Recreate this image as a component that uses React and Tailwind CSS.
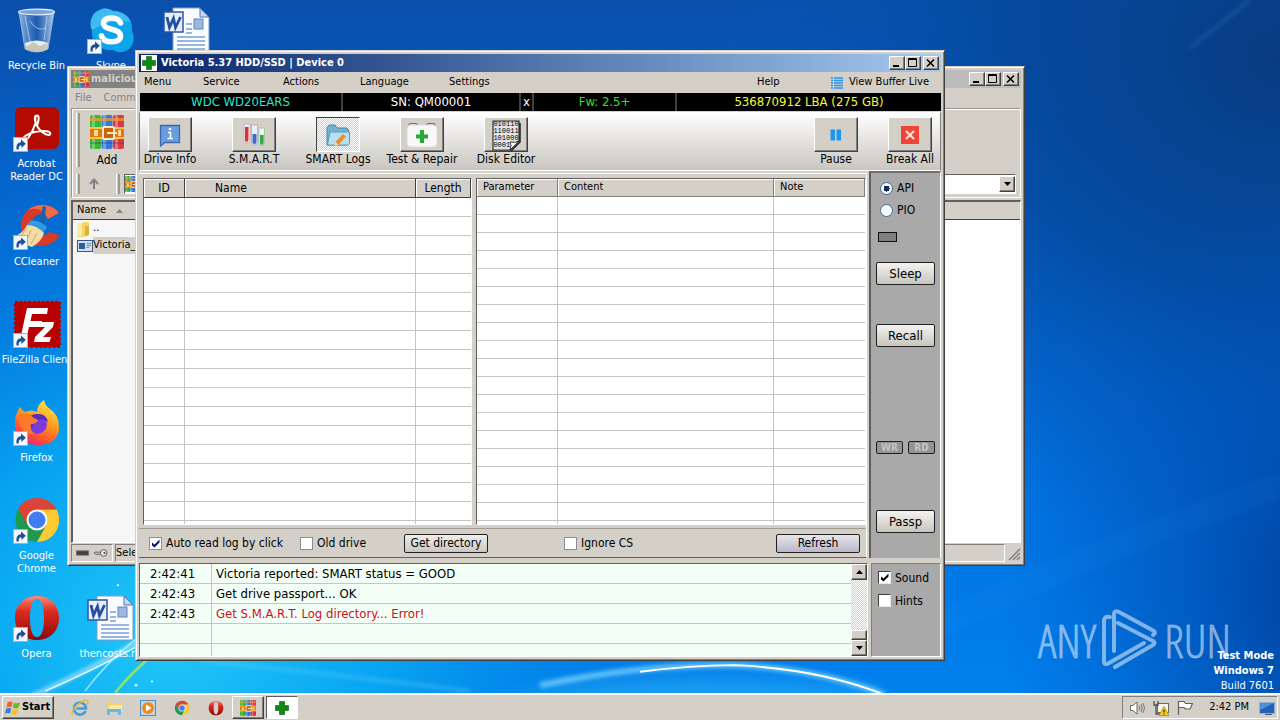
import React from "react";

const raised =
  "border border-t-white border-l-white border-r-[#404040] border-b-[#404040] bg-[#d4d0c8] shadow-[inset_-1px_-1px_0_#808080]";
const frame =
  "border border-t-[#d4d0c8] border-l-[#d4d0c8] border-r-[#404040] border-b-[#404040] bg-[#d4d0c8] shadow-[inset_1px_1px_0_#fff,inset_-1px_-1px_0_#808080] p-[3px]";
const sunken = "border border-t-[#606060] border-l-[#606060] border-r-white border-b-white";
const dither = "bg-[repeating-conic-gradient(#fff_0_25%,#d4d0c8_0_50%)] bg-[length:2px_2px]";

/* ---------- wallpaper ---------- */

function Wallpaper() {
  return (
    <svg
      className="absolute inset-0 h-full w-full"
      viewBox="0 0 1280 720"
      preserveAspectRatio="none"
      aria-hidden="true"
    >
      <defs>
        <linearGradient id="wpBase" x1="0" y1="0" x2="0" y2="1">
          <stop offset="0" stopColor="#0a50ac" />
          <stop offset="0.45" stopColor="#0268d4" />
          <stop offset="1" stopColor="#0080ee" />
        </linearGradient>
        <radialGradient id="wpGlow" gradientUnits="userSpaceOnUse" cx="0" cy="0" r="1" gradientTransform="translate(170 660) scale(620 620)">
          <stop offset="0" stopColor="#22c8f8" />
          <stop offset="0.35" stopColor="#08a8f2" stopOpacity="0.9" />
          <stop offset="0.7" stopColor="#0480e4" stopOpacity="0.4" />
          <stop offset="1" stopColor="#0268d4" stopOpacity="0" />
        </radialGradient>
        <radialGradient id="wpDark" gradientUnits="userSpaceOnUse" cx="0" cy="0" r="1" gradientTransform="translate(1280 60) scale(560 520)">
          <stop offset="0" stopColor="#083c80" />
          <stop offset="0.5" stopColor="#04489c" stopOpacity="0.8" />
          <stop offset="1" stopColor="#0458b8" stopOpacity="0" />
        </radialGradient>
        <radialGradient id="wpDark2" gradientUnits="userSpaceOnUse" cx="0" cy="0" r="1" gradientTransform="translate(1320 620) scale(320 420)">
          <stop offset="0" stopColor="#003c98" stopOpacity="0.95" />
          <stop offset="1" stopColor="#0050b8" stopOpacity="0" />
        </radialGradient>
        <filter id="wpSoft" x="-20%" y="-20%" width="140%" height="140%">
          <feGaussianBlur stdDeviation="2" />
        </filter>
        <filter id="wpSofter" x="-20%" y="-60%" width="140%" height="220%">
          <feGaussianBlur stdDeviation="10" />
        </filter>
      </defs>
      <rect width="1280" height="720" fill="url(#wpBase)" />
      <rect width="1280" height="720" fill="url(#wpGlow)" />
      <rect width="1280" height="720" fill="url(#wpDark)" />
      <rect width="1280" height="720" fill="url(#wpDark2)" />
      <path d="M480 740 Q640 680 880 720 V760 H480Z" fill="#30b8f8" opacity="0.55" filter="url(#wpSofter)" />
      <path d="M930 640 Q1040 580 1280 490 V520 Q1080 590 930 670Z" fill="#3aa0f0" opacity="0.06" filter="url(#wpSoft)" />
      <path d="M1190 50 L1250 0" stroke="#6fb0ee" strokeWidth="2" opacity="0.3" filter="url(#wpSoft)" />
      <path d="M540 712 Q640 690 735 691 Q820 695 885 722" fill="none" stroke="#8fe0ff" strokeWidth="6" opacity="0.7" filter="url(#wpSoft)" />
      <path d="M640 698 Q690 691 735 691 Q820 695 885 722" fill="none" stroke="#fff" strokeWidth="2" />
      <path d="M30 724 Q90 696 150 660" fill="none" stroke="#fff" strokeWidth="3" opacity="0.75" filter="url(#wpSoft)" />
      <path d="M45 718 Q90 698 140 670" fill="none" stroke="#e6fbff" strokeWidth="1.5" />
      <path d="M85 718 Q105 690 138 662" fill="none" stroke="#b8f2ff" strokeWidth="1.5" opacity="0.8" />
      <path d="M115 720 Q130 700 160 674" fill="none" stroke="#8fe36a" strokeWidth="2.5" />
      <path d="M200 686 Q330 700 470 718" fill="none" stroke="#7fdcff" strokeWidth="2" opacity="0.6" filter="url(#wpSoft)" />
      <circle cx="118" cy="608" r="1.2" fill="#d8f8ff" />
      <circle cx="152" cy="708" r="1" fill="#fff" />
      <circle cx="136" cy="712" r="1.4" fill="#d8f8ff" />
    </svg>
  );
}

/* ---------- desktop icons ---------- */

function ShortcutArrow() {
  return (
    <g>
      <rect x="0.5" y="33.5" width="14" height="14" fill="#f4f8fc" stroke="#9ab4cc" />
      <path d="M3.5 45.5C3 41 4.500 38.500 8 38.300V35.500L12.800 39.800 8.400 44V41.300C6.400 41.300 5.300 42.800 5.800 45.500Z" fill="#1f4f96" />
    </g>
  );
}

const Art = ({ children, shortcut }) => (
  <svg className="h-12 w-12 shrink-0" viewBox="0 0 48 48" aria-hidden="true">
    {children}
    {shortcut && <ShortcutArrow />}
  </svg>
);

const RecycleArt = () => (
  <Art>
    <defs>
      <linearGradient id="bin" x1="0" x2="1">
        <stop offset="0" stopColor="#b9d4f0" stopOpacity="0.75" />
        <stop offset="0.5" stopColor="#2f66b4" stopOpacity="0.55" />
        <stop offset="1" stopColor="#d8e8f8" stopOpacity="0.8" />
      </linearGradient>
    </defs>
    <path d="M6 6 L12 43 Q24 49 35 43 L41 6Z" fill="url(#bin)" stroke="#a8c4e0" strokeWidth="0.8" />
    <path d="M12 37 Q24 32 35 37 L34 43 Q24 48 13 43Z" fill="#e8eef2" />
    <path d="M13 41 L20 36 27 40 34 37 33 44 Q24 48 14 44Z" fill="#c9c6b8" />
    <path d="M12 10 L17 36 M34 10 L31 34 M17 15 Q24 26 33 22" stroke="#dcecff" strokeWidth="1" opacity="0.6" fill="none" />
    <ellipse cx="23.500" cy="6" rx="18" ry="2.800" fill="#7ea6d4" stroke="#e2eefa" strokeWidth="1.200" />
  </Art>
);

const AcrobatArt = () => (
  <Art shortcut>
    <rect x="2" y="3" width="44" height="42" rx="6" fill="#b30b00" />
    <path
      d="M24 11.500c-2.600 0-2.700 3.400-1.300 7.400C21 24 18 30 15.500 33.500c-1.700 2.300-3.800 3-5 1.800-1.500-2 4.500-5.800 11-7.200 5-1.100 11.500-1.500 14.500-.3 2 .9 1.800 3.300-.7 3.200-4-.2-9.500-5-12-10.500C21.700 16.500 22 11.500 24 11.500c2.400 0 2 4.500.2 9.500"
      fill="none"
      stroke="#fff"
      strokeWidth="2"
    />
  </Art>
);

const CCleanerArt = () => (
  <Art shortcut>
    <path d="M46 11C40 2 24 0 15 8 5 17 6 34 15 40c10 7 25 5 32-7l-11-3c-4 5-12 5-15 0-4-6-3-14 3-17 5-2 9 0 11 4Z" fill="#d83a28" />
    <path d="M46 11C40 2 24 0 15 8q14-5 20 9Z" fill="#ee6a4a" />
    <path d="M26 22 30 4l3 1-2 18Z" fill="#1464a8" />
    <path d="M17 19q8-2 17 6l-3 5q-8-7-17-7Z" fill="#2f9be0" />
    <path d="M14 23q10 0 17 8-2 8-12 14Q8 42 1 34 10 32 14 23Z" fill="#f2dca8" />
    <path d="M12 28l-5 8M18 28l-5 12M24 31l-6 11" stroke="#d0a860" strokeWidth="1" />
  </Art>
);

const FileZillaArt = () => (
  <Art shortcut>
    <rect x="2" y="2" width="45" height="45" fill="#b80000" stroke="#b80000" strokeWidth="2.500" strokeDasharray="2.500 2" />
    <path d="M14 8H35L34 14H19L17.500 21H29L28 27H16L13 40H7Z" fill="#fff" />
    <path d="M25 22H41L40 27 30 37H38L36.500 42H21L22 37 32 27H24Z" fill="#fff" />
  </Art>
);

const FirefoxArt = () => (
  <Art shortcut>
    <defs>
      <linearGradient id="fox" x1="0.8" y1="0" x2="0.3" y2="1">
        <stop offset="0" stopColor="#fff04a" />
        <stop offset="0.45" stopColor="#ff9a1e" />
        <stop offset="0.8" stopColor="#ff4a38" />
        <stop offset="1" stopColor="#e6227e" />
      </linearGradient>
    </defs>
    <path d="M7 9q2 4 5 5 7-3 12 0 0-7 7-12 1 6 6 9 9 6 9 18C46 42 36 47 25 47 12 47 2 38 2 26 2 18 4 14 7 9Z" fill="url(#fox)" />
    <circle cx="24" cy="26" r="10" fill="#7b3bdc" />
    <path d="M14 23q2-7 10-7 9-1 11 8-5-4-9-2-7 1-6 7-4-1-6-6Z" fill="#5a2fb8" />
    <path d="M4 18q8-6 17 2l4 2q-1 4-7 4-2 6 4 10Q8 38 4 18Z" fill="#ff7a28" />
  </Art>
);

function ChromeShapes() {
  return (
    <>
      <path d="M24 24 5.400 13A22 22 0 0 0 24 46L33 30Z" fill="#1e9a4e" />
      <path d="M24 13.500H43.500A22 22 0 0 1 24 46L33 29.500Z" fill="#fcc934" />
      <path d="M24 13.500H43.500A22 22 0 0 0 5.200 12.800L14.500 29Z" fill="#dc4437" />
      <circle cx="24" cy="24" r="10.500" fill="#fff" />
      <circle cx="24" cy="24" r="8.500" fill="#3f7df0" />
    </>
  );
}

function OperaShapes({ id }) {
  return (
    <>
      <defs>
        <linearGradient id={id} x1="0" y1="0" x2="0" y2="1">
          <stop offset="0" stopColor="#ff8a78" />
          <stop offset="0.35" stopColor="#dc2a20" />
          <stop offset="1" stopColor="#8e0808" />
        </linearGradient>
      </defs>
      <path
        fillRule="evenodd"
        fill={`url(#${id})`}
        d="M24 2C37 2 46 11 46 24S37 46 24 46 2 37 2 24 11 2 24 2ZM24 5c-5 0-7 8-7 19s2 19 7 19 7-8 7-19-2-19-7-19Z"
      />
    </>
  );
}

const ChromeArt = () => (
  <Art shortcut>
    <ChromeShapes />
  </Art>
);
const OperaArt = () => (
  <Art shortcut>
    <OperaShapes id="operaBig" />
  </Art>
);

const SkypeArt = () => (
  <Art shortcut>
    <path d="M15 3c4-1 8 0 11 2 12 0 20 8 19 20 3 6 2 13-3 18-5 4-11 4-16 1C12 45 4 36 5 24 2 17 4 6 15 3Z" fill="#0fa5ea" />
    <path d="M15 3c4-1 8 0 11 2 8 0 15 4 18 11Q25 12 5 24C2 17 4 6 15 3Z" fill="#52c4f4" opacity="0.7" />
    <path
      d="M33.500 17q-2-5-9-5-8 0-8 5.500 0 4 8 5.700 9 1.800 9 6.600 0 6-9 6-8 0-10-6"
      fill="none"
      stroke="#fff"
      strokeWidth="5.500"
      strokeLinecap="round"
    />
  </Art>
);

const WordArt = () => (
  <Art>
    <path d="M10 2H37L46 11V46H10Z" fill="#fafcff" stroke="#7f9cc8" />
    <path d="M37 2V11H46Z" fill="#c4d6f0" stroke="#4f78b8" />
    <path d="M14 31H42M14 35H42M14 39H42M14 43H42M23 18H29M23 23H29M23 27H29" stroke="#7aa0d4" strokeWidth="1.300" />
    <rect x="31" y="13" width="9" height="10" fill="#9db8dc" stroke="#5f86bc" />
    <rect x="1" y="6" width="19" height="20" fill="#e8effa" stroke="#2f56a4" strokeWidth="1.500" />
    <path d="M4 11 6.500 21.500 10.500 12.500 12.500 21.500 17.500 11" fill="none" stroke="#234f9e" strokeWidth="2.800" />
  </Art>
);

const desktopItems = [
  { name: "Recycle Bin", art: RecycleArt, cell: "col-start-1 row-start-1" },
  { name: "Acrobat Reader DC", art: AcrobatArt, cell: "col-start-1 row-start-2", wrap: true },
  { name: "CCleaner", art: CCleanerArt, cell: "col-start-1 row-start-3" },
  { name: "FileZilla Client", art: FileZillaArt, cell: "col-start-1 row-start-4" },
  { name: "Firefox", art: FirefoxArt, cell: "col-start-1 row-start-5" },
  { name: "Google Chrome", art: ChromeArt, cell: "col-start-1 row-start-6", wrap: true },
  { name: "Opera", art: OperaArt, cell: "col-start-1 row-start-7" },
  { name: "Skype", art: SkypeArt, cell: "col-start-2 row-start-1" },
  { name: "thencosts.rtf", art: WordArt, cell: "col-start-2 row-start-7" },
  { name: "", art: WordArt, cell: "col-start-3 row-start-1" },
];

function DesktopIcons() {
  return (
    <div className="relative grid grid-cols-[73px_76px_76px] grid-rows-[repeat(7,98px)]">
      {desktopItems.map(({ name, art: Picture, cell, wrap }, i) => (
        <div key={i} className={`flex flex-col items-center pt-1.5 ${cell}`}>
          <Picture />
          <span
            className={
              wrap
                ? "mt-[5px] w-14 text-center leading-[13px] text-white"
                : "mt-[5px] text-center leading-[13px] whitespace-nowrap text-white"
            }
          >
            {name}
          </span>
        </div>
      ))}
    </div>
  );
}

/* ---------- shared window parts ---------- */

function WindowButtons() {
  const btn = `flex h-3.5 w-4 items-center justify-center ${raised}`;
  return (
    <div className="ml-auto flex">
      <button type="button" aria-label="Minimize" className={btn}>
        <svg className="h-2.5 w-3" viewBox="0 0 12 10"><path d="M2 7H8V9H2Z" /></svg>
      </button>
      <button type="button" aria-label="Maximize" className={btn}>
        <svg className="h-2.5 w-3" viewBox="0 0 12 10"><path d="M1.500 0.500H9.500V8.500H1.500ZM1.500 1.500H9.500" fill="none" stroke="#000" /></svg>
      </button>
      <button type="button" aria-label="Close" className={`${btn} ml-0.5`}>
        <svg className="h-2.5 w-3" viewBox="0 0 12 10"><path d="M2 1.500 9 8.500M9 1.500 2 8.500" stroke="#000" strokeWidth="1.600" /></svg>
      </button>
    </div>
  );
}

function Triangle({ up }) {
  return (
    <svg className="h-1 w-[7px]" viewBox="0 0 7 4" aria-hidden="true">
      <path d={up ? "M0 4H7L3.500 0Z" : "M0 0H7L3.500 4Z"} />
    </svg>
  );
}

function CrossIcon({ className }) {
  return (
    <svg className={className} viewBox="0 0 16 16" aria-hidden="true">
      <rect width="16" height="16" fill="#fff" />
      <path d="M5.500 1.500H10.500V5.500H14.500V10.500H10.500V14.500H5.500V10.500H1.500V5.500H5.500Z" fill="#0c8a14" stroke="#065c0a" strokeWidth="0.600" />
    </svg>
  );
}

function BooksIcon({ className }) {
  return (
    <svg className={className} viewBox="0 0 34 34" aria-hidden="true">
      <rect x="0" y="0" width="11" height="34" rx="2" fill="#38b838" />
      <rect x="11.500" y="0" width="11" height="34" rx="2" fill="#3878d8" />
      <rect x="23" y="0" width="11" height="34" rx="2" fill="#d83848" />
      <path d="M2 0H5V34H2ZM13 0H16V34H13ZM25 0H28V34H25Z" fill="#fff" opacity="0.300" />
      <path d="M0 3H34V6H0Z" fill="#f0a030" opacity="0.700" />
      <path d="M0 27H34V29H0Z" fill="#203050" opacity="0.250" />
      <path d="M0 12H34V24H0Z" fill="#e07a10" />
      <path d="M0 12H34V14H0ZM0 22H34V24H0Z" fill="#ffc050" />
      <path d="M4 15H8V21H4ZM28 15H31V21H28Z" fill="#fbd890" />
      <rect x="13" y="12" width="11" height="12" rx="1" fill="#c86410" stroke="#f4e8c0" strokeWidth="2" />
      <path d="M17 17H27V19H17Z" fill="#f4e8c0" />
    </svg>
  );
}

function Check({ label, defaultChecked, classic, className = "" }) {
  return (
    <label className={`flex items-center gap-1 whitespace-nowrap ${className}`}>
      <span className="relative flex">
        <input
          type="checkbox"
          defaultChecked={defaultChecked}
          className={
            classic
              ? "peer h-[13px] w-[13px] appearance-none border border-t-[#404040] border-l-[#404040] border-r-[#e8e8e8] border-b-[#e8e8e8] bg-white"
              : "peer h-[13px] w-[13px] appearance-none border border-[#8a8f98] bg-white"
          }
        />
        <svg
          className="pointer-events-none absolute inset-0 hidden h-[13px] w-[13px] peer-checked:block"
          viewBox="0 0 13 13"
          aria-hidden="true"
        >
          <path d="M3 5.500V8.500L5.500 10.500 10.500 5.500V2.500L5.500 7.500Z" fill={classic ? "#000" : "#10186c"} />
        </svg>
      </span>
      <span>{label}</span>
    </label>
  );
}

/* ---------- archive window ---------- */

const grip = "h-5 w-1 border-r-2 border-l border-r-[#9a9690] border-l-white";

function ArchiveWindow() {
  return (
    <section className={`absolute top-[66px] left-[67px] w-[958px] text-black ${frame}`}>
      <header className="flex h-[18px] items-center gap-0.5 bg-linear-to-r from-[#808080] to-[#c0c0c0] px-0.5 font-bold text-[#d4d0c8]">
        <BooksIcon className="h-4 w-4" />
        <span>malicious</span>
        <WindowButtons />
      </header>
      <nav className="flex h-5 items-center gap-3 px-1 text-[#848284]">
        <button type="button">File</button>
        <button type="button">Commands</button>
      </nav>
      <div className="border border-t-[#9a9690] border-l-[#9a9690] border-r-white border-b-white shadow-[inset_1px_1px_0_#fff]">
        <div className="flex h-[62px] items-center pl-1">
          <span className="mr-1.5 h-[54px] w-1 border-r-2 border-l border-r-[#9a9690] border-l-white" />
          <button type="button" className="flex flex-col items-center gap-1 px-1 pt-0.5 text-[12px]">
            <BooksIcon className="h-[34px] w-[34px]" />
            <span className="leading-[14px]">Add</span>
          </button>
        </div>
        <div className="flex h-[26px] items-center gap-1 px-1">
          <span className={grip} />
          <button type="button" aria-label="Up one level" className="flex h-5 w-5 items-center justify-center">
            <svg className="h-3 w-3" viewBox="0 0 12 12"><path d="M6 11V2M2 6 6 1.500 10 6" fill="none" stroke="#848284" strokeWidth="2" /></svg>
          </button>
          <span className={`ml-2 ${grip}`} />
          <div className={`flex h-5 flex-1 items-center justify-between bg-white ${sunken}`}>
            <BooksIcon className="h-4 w-4" />
            <button type="button" aria-label="Show folders" className={`flex h-4 w-4 items-center justify-center ${raised}`}>
              <Triangle />
            </button>
          </div>
        </div>
      </div>
      <div className={`mt-0.5 h-[343px] border-t-2 border-l-2 bg-white ${sunken}`}>
        <div className="flex h-[18px] items-center gap-2.5 border-b border-[#404040] bg-[#d4d0c8] pl-1">
          <span>Name</span>
          <svg className="h-1 w-[7px]" viewBox="0 0 7 4" aria-hidden="true"><path d="M0 4H7L3.500 0Z" fill="#848284" /></svg>
        </div>
        <div className="h-[322px] w-[140px] bg-[#f6f6f6]">
          <div className="flex h-[17px] items-center gap-1 pl-1">
            <svg className="h-4 w-3" viewBox="0 0 12 16" aria-hidden="true">
              <path d="M0 2H5L7 1H12V14L7 16H0Z" fill="#f4d56a" />
              <path d="M0 2H5V15H0Z" fill="#fbeaa4" />
              <path d="M8 5H12V14L8 15Z" fill="#dcb040" />
            </svg>
            <span>..</span>
          </div>
          <div className="flex h-[17px] items-center pl-1">
            <svg className="h-3 w-4" viewBox="0 0 16 12" aria-hidden="true">
              <rect x="0.500" y="0.500" width="15" height="11" fill="#cfe0f2" stroke="#3a5a88" />
              <rect x="2" y="3" width="6" height="6" fill="#2f5f9c" />
              <path d="M9.500 3.500H14M9.500 5.500H14M9.500 7.500H12" stroke="#6a8cb8" />
            </svg>
            <span className="flex-1 bg-[#d4d0c8]">Victoria_</span>
          </div>
        </div>
      </div>
      <footer className="mt-px flex h-[18px] items-stretch gap-0.5">
        <span className="flex w-[42px] items-center gap-1 border border-t-[#808080] border-l-[#808080] border-r-white border-b-white px-1">
          <svg className="h-2 w-4" viewBox="0 0 16 8" aria-hidden="true"><rect x="0.500" y="1.500" width="14" height="5" fill="#404040" stroke="#787878" /></svg>
          <svg className="h-3 w-4" viewBox="0 0 16 12" aria-hidden="true">
            <circle cx="11" cy="6" r="3.800" fill="#e4e2dc" stroke="#505050" />
            <circle cx="12" cy="6" r="1.200" fill="#505050" />
            <path d="M7 5H1L0 6 2 7.500H7" fill="#c8c4bc" stroke="#606060" />
          </svg>
        </span>
        <span className="flex flex-1 items-center border border-t-[#808080] border-l-[#808080] border-r-white border-b-white">Selected</span>
        <svg className="h-[18px] w-3.5 shrink-0" viewBox="0 0 14 18" aria-hidden="true">
          <path d="M2 16 13 5M6 16 13 9M10 16 13 13" stroke="#808080" strokeWidth="1.500" />
        </svg>
      </footer>
    </section>
  );
}

/* ---------- disk utility window ---------- */

const toolIcons = {
  info: (
    <svg className="h-6 w-6" viewBox="0 0 24 24">
      <path d="M2.500 2.500H21.500V19.500H7L2.500 23Z" fill="#6a9ce0" stroke="#3f68ac" strokeWidth="1.300" />
      <path d="M10 9.500H12.500V15.500M9.500 15.500H15" stroke="#fff" strokeWidth="1.500" fill="none" />
      <circle cx="12" cy="6" r="1.300" fill="#fff" />
    </svg>
  ),
  tubes: (
    <svg className="h-6 w-6" viewBox="0 0 24 24">
      <path d="M2 1H8V17A3 3 0 0 1 2 17Z" fill="#f6eef0" stroke="#c4a4a8" strokeWidth="0.700" />
      <path d="M3 4H6.500V17A1.700 1.700 0 0 1 3 17Z" fill="#d83038" />
      <path d="M9.500 2H15.500V19A3 3 0 0 1 9.500 19Z" fill="#e8f0fa" stroke="#90a8c8" strokeWidth="0.700" />
      <path d="M10.500 11H14.500V19A2 2 0 0 1 10.500 19Z" fill="#3c68c8" />
      <path d="M17 5H22.500V20A2.700 2.700 0 0 1 17 20Z" fill="#ecf6ec" stroke="#90b898" strokeWidth="0.700" />
      <path d="M18 12H21.700V20A1.800 1.800 0 0 1 18 20Z" fill="#38a850" />
    </svg>
  ),
  folder: (
    <svg className="h-6 w-6" viewBox="0 0 24 24">
      <path d="M1 5 3 2H9L11 5H21L22.500 7V20L21 22H1Z" fill="#6fb4d2" stroke="#4488a8" />
      <path d="M4 9H23.500V20L22 22H1.500Z" fill="#b8e0ee" stroke="#5a9cb8" />
      <path d="M17 11 20 13.500 12.500 22 8.500 22.500 9.500 19Z" fill="#f08c28" />
      <path d="M9.500 19 12.500 22 8.500 22.500Z" fill="#fbe4c0" />
    </svg>
  ),
  kit: (
    <svg className="h-[26px] w-8" viewBox="0 0 32 26">
      <path d="M2 4 4 1.500H10L12 3M20 3 22 1.500H28L30 4" fill="none" stroke="#707070" strokeWidth="1.200" />
      <rect x="1" y="3" width="30" height="22" rx="4" fill="#f8f8f8" stroke="#dcdcdc" />
      <path d="M14 8H18V12.500H22V16.500H18V21H14V16.500H10V12.500H14Z" fill="#28a838" />
    </svg>
  ),
  pause: (
    <svg className="h-3 w-3" viewBox="0 0 12 12">
      <path d="M0.500 0.500H5V11.500H0.500ZM6.500 0.500H11V11.500H6.500Z" fill="#1e96f0" />
    </svg>
  ),
  stop: (
    <svg className="h-[18px] w-[18px]" viewBox="0 0 18 18">
      <rect width="18" height="18" fill="#f04438" />
      <path d="M5 5 13 13M13 5 5 13" stroke="#ffe0dc" strokeWidth="2.200" />
    </svg>
  ),
};

function BinarySheet() {
  return (
    <span className="relative flex h-8 w-8 flex-col items-center">
      <svg className="absolute inset-0 h-8 w-8" viewBox="0 0 32 32" aria-hidden="true">
        <path d="M3 2H29V22L20 31H3Z" fill="#e4e4e4" stroke="#303030" strokeWidth="1.200" />
        <path d="M29 22L20 31Q22 26 20 23 26 24 29 22Z" fill="#fff" stroke="#303030" />
        <path d="M30 4V23L21 32" fill="none" stroke="#202020" strokeWidth="1.500" />
      </svg>
      <span className="relative pt-0.5 text-left font-['Liberation_Mono',monospace] text-[7px] leading-[7px] text-black">
        010110<br />110011<br />101000<br />0001
      </span>
    </span>
  );
}

function Tool({ label, icon, active }) {
  return (
    <button type="button" className="flex w-[58px] flex-col items-center whitespace-nowrap">
      <span
        className={
          active
            ? `flex h-[35px] w-11 items-center justify-center border border-t-[#404040] border-l-[#404040] border-r-white border-b-white ${dither}`
            : `flex h-[35px] w-11 items-center justify-center ${raised}`
        }
      >
        {icon}
      </span>
      <span className="text-[12px] leading-[15px]">{label}</span>
    </button>
  );
}

function EmptyRows({ count, columns, rowClass }) {
  return (
    <>
      {Array.from({ length: count }, (_, r) => (
        <tr key={r} className={rowClass}>
          {Array.from({ length: columns }, (_, c) => (
            <td key={c} className="border-r border-b border-[#c4c4c4] p-0 last:border-r-0" />
          ))}
        </tr>
      ))}
      <tr className="h-[3px]">
        {Array.from({ length: columns }, (_, c) => (
          <td key={c} className="border-r border-[#c4c4c4] p-0 last:border-r-0" />
        ))}
      </tr>
    </>
  );
}

const headCell =
  "border-r border-b border-[#404040] bg-[#d4d0c8] p-0 font-normal shadow-[inset_1px_1px_0_#fff]";
const headCellSoft =
  "border-r border-b border-[#808080] bg-[#d4d0c8] p-0 pl-1.5 text-left font-normal shadow-[inset_1px_1px_0_#fff]";

function LogsPane() {
  return (
    <div className="grid grid-cols-[329px_1fr] items-start gap-1 pt-1 pl-1">
      <div className={`bg-white ${sunken}`}>
        <table className="w-full table-fixed border-separate border-spacing-0 text-[12px]">
          <colgroup>
            <col className="w-[41px]" />
            <col />
            <col className="w-[55px]" />
          </colgroup>
          <thead>
            <tr className="h-[19px] leading-[18px]">
              <th className={headCell}>ID</th>
              <th className={`${headCell} pl-[30px] text-left`}>Name</th>
              <th className={headCell}>Length</th>
            </tr>
          </thead>
          <tbody>
            <EmptyRows count={17} columns={3} rowClass="h-[19px]" />
          </tbody>
        </table>
      </div>
      <div className={`bg-white ${sunken}`}>
        <table className="w-full table-fixed border-separate border-spacing-0">
          <colgroup>
            <col className="w-[81px]" />
            <col />
            <col className="w-[91px]" />
          </colgroup>
          <thead>
            <tr className="h-[18px]">
              <th className={headCellSoft}>Parameter</th>
              <th className={headCellSoft}>Content</th>
              <th className={headCellSoft}>Note</th>
            </tr>
          </thead>
          <tbody>
            <EmptyRows count={18} columns={3} rowClass="h-[18px]" />
          </tbody>
        </table>
      </div>
    </div>
  );
}

const sideButton =
  "h-[23px] rounded-xs border border-[#202020] bg-linear-to-b from-[#f4f3f0] to-[#c8c5bd] text-[13px]";

function SidePanel() {
  return (
    <aside className="flex flex-col border-t-2 border-r border-l-2 border-t-[#707070] border-r-white border-l-[#606060] bg-[#a9a9a9] px-[5px] pt-1 pb-[25px] text-[12px]">
      {["API", "PIO"].map((mode) => (
        <label key={mode} className="flex h-[22px] items-center gap-1 pl-1">
          <input
            type="radio"
            name="mode"
            defaultChecked={mode === "API"}
            className="h-[13px] w-[13px] appearance-none rounded-full border border-[#44688c] bg-[#f4fafc] checked:bg-[radial-gradient(circle,#14285c_0_3px,#f4fafc_3px)]"
          />
          {mode}
        </label>
      ))}
      <span className="mt-[11px] ml-0.5 h-2.5 w-[19px] border border-[#101010] bg-[#808080]" />
      <button type="button" className={`mt-5 ${sideButton}`}>Sleep</button>
      <button type="button" className={`mt-[39px] ${sideButton}`}>Recall</button>
      <div className="mt-auto flex justify-between text-[10px] leading-[11px] font-bold text-[#c4c4c4]">
        <span className="w-[27px] rounded-xs border border-[#202020] bg-[#949494] text-center">WR</span>
        <span className="w-[27px] rounded-xs border border-[#202020] bg-[#949494] text-center">RD</span>
      </div>
      <button type="button" className={`mt-14 ${sideButton}`}>Passp</button>
    </aside>
  );
}

const logRows = [
  { time: "2:42:41", text: "Victoria reported: SMART status = GOOD" },
  { time: "2:42:43", text: "Get drive passport... OK" },
  { time: "2:42:43", text: "Get S.M.A.R.T. Log directory... Error!", error: true },
  { time: "", text: "" },
];

function EventLog() {
  return (
    <div className={`mr-px flex bg-[#f3fff6] ${sunken}`}>
      <table className="flex-1 table-fixed border-separate border-spacing-0 text-[13px] leading-[19px]">
        <colgroup>
          <col className="w-[72px]" />
          <col />
        </colgroup>
        <tbody>
          {logRows.map((row, i) => (
            <tr key={i} className="h-5">
              <td className="border-r border-b border-[#c0c8c0] py-0 pr-0 pl-2.5">{row.time}</td>
              <td
                className={
                  row.error
                    ? "border-b border-[#c0c8c0] py-0 pr-0 pl-1 text-[#d01020]"
                    : "border-b border-[#c0c8c0] py-0 pr-0 pl-1"
                }
              >
                {row.text}
              </td>
            </tr>
          ))}
          <tr className="h-3">
            <td className="border-r border-[#c0c8c0] p-0" />
            <td className="p-0" />
          </tr>
        </tbody>
      </table>
      <div className={`flex w-4 flex-col ${dither}`}>
        <button type="button" aria-label="Scroll up" className={`flex h-4 items-center justify-center ${raised}`}>
          <Triangle up />
        </button>
        <span className={`mt-auto h-2.5 ${raised}`} />
        <button type="button" aria-label="Scroll down" className={`flex h-4 items-center justify-center ${raised}`}>
          <Triangle />
        </button>
      </div>
    </div>
  );
}

function DiskWindow() {
  return (
    <section className={`absolute top-[50px] left-[135px] w-[810px] text-black ${frame}`}>
      <header className="flex h-[18px] items-center gap-1 bg-linear-to-r from-[#0a246a] to-[#a6caf0] px-0.5 font-bold text-white">
        <CrossIcon className="h-4 w-4" />
        <h1>Victoria 5.37 HDD/SSD | Device 0</h1>
        <WindowButtons />
      </header>
      <nav className="grid h-[21px] grid-cols-[59px_80px_77px_89px_1fr_74px_auto] items-center pr-3 pl-[5px] text-left">
        {["Menu", "Service", "Actions", "Language", "Settings", "Help"].map((item) => (
          <button key={item} type="button" className="text-left">{item}</button>
        ))}
        <button type="button" className="flex items-center gap-1.5">
          <svg className="h-3 w-3" viewBox="0 0 12 12" aria-hidden="true">
            <path d="M0 1H2M3 1H12M0 3.500H2M3 3.500H12M0 6H2M3 6H12M0 8.500H2M3 8.500H12M0 11H2M3 11H12" stroke="#2a94ee" strokeWidth="1.500" />
          </svg>
          View Buffer Live
        </button>
      </nav>
      <div className="ml-px grid h-[18px] grid-cols-[201px_176px_11px_141px_1fr] gap-0.5 bg-[#404040] text-center text-[13px] leading-[18px]">
        <span className="bg-black text-[#2ee0d0]">WDC WD20EARS</span>
        <span className="bg-black text-white">SN: QM00001</span>
        <button type="button" aria-label="Clear" className="bg-black leading-[18px] text-white">x</button>
        <span className="bg-black text-[#28e028]">Fw: 2.5+</span>
        <span className="bg-black text-[#f8f830]">536870912 LBA (275 GB)</span>
      </div>
      <div className="mt-px flex h-[59px] justify-between border border-t-white border-l-[#808080] border-r-[#808080] border-b-white bg-linear-to-b from-white to-[#c9c6c0] px-px pt-1">
        <div className="flex gap-[26px]">
          <Tool label="Drive Info" icon={toolIcons.info} />
          <Tool label="S.M.A.R.T" icon={toolIcons.tubes} />
          <Tool label="SMART Logs" icon={toolIcons.folder} active />
          <Tool label="Test & Repair" icon={toolIcons.kit} />
          <Tool label="Disk Editor" icon={<BinarySheet />} />
        </div>
        <div className="flex gap-4">
          <Tool label="Pause" icon={toolIcons.pause} />
          <Tool label="Break All" icon={toolIcons.stop} />
        </div>
      </div>
      <div className="grid grid-cols-[1fr_72px]">
        <main className="mt-0.5 mr-0.5 border-t border-r border-b border-t-white border-r-white border-b-[#606060]">
          <LogsPane />
          <form
            className="mt-[3px] grid h-[29px] grid-cols-[151px_104px_160px_1fr_84px] items-center border-t border-[#a09c94] pr-1.5 pl-2.5 text-[12px]"
            onSubmit={(e) => e.preventDefault()}
          >
            <Check label="Auto read log by click" defaultChecked />
            <Check label="Old drive" />
            <button type="button" className="h-[19px] w-21 rounded-xs border border-[#202020] bg-linear-to-b from-[#f0eeea] to-[#cbc7c0] leading-4 whitespace-nowrap">
              Get directory
            </button>
            <Check label="Ignore CS" />
            <button type="button" className="h-[19px] rounded-xs border border-[#202020] bg-linear-to-b from-[#e8e6ea] to-[#b8b8cc] leading-4">
              Refresh
            </button>
          </form>
        </main>
        <SidePanel />
      </div>
      <div className="mt-[5px] grid grid-cols-[1fr_72px]">
        <EventLog />
        <aside className="ml-0.5 flex flex-col border border-t-[#808080] border-l-[#808080] border-r-white border-b-white bg-[#a9a9a9] pt-0.5 pl-1.5 text-[12px]">
          <Check label="Sound" defaultChecked classic className="h-[23px]" />
          <Check label="Hints" classic className="h-[23px]" />
        </aside>
      </div>
    </section>
  );
}

/* ---------- watermark and build info ---------- */

function Watermark() {
  return (
    <div className="absolute right-[49px] bottom-[22px] flex items-center gap-1.5 font-['Open_Sans_Condensed_Light','Open_Sans_Condensed','Liberation_Sans_Narrow',sans-serif] text-[46px] leading-[60px] font-light text-white/45 [-webkit-text-stroke:1px_rgb(255_255_255/0.35)]">
      <span>ANY</span>
      <svg className="h-[62px] w-14 opacity-50" viewBox="0 0 56 62" aria-hidden="true">
        <g fill="none" stroke="#fff" strokeWidth="4" strokeLinejoin="round" strokeLinecap="round">
          <path d="M8 8Q2 7 2 12V52Q2 57 7 54L42 34" />
          <path d="M12 42V5Q12 1 17 3L52 22Q54 24 51 26" />
          <path d="M16 14 51 32Q54 34 51 36L13 58" />
        </g>
      </svg>
      <span>RUN</span>
    </div>
  );
}

/* ---------- taskbar ---------- */

const quickLaunch = [
  {
    name: "Internet Explorer",
    art: (
      <svg className="h-[18px] w-[18px]" viewBox="0 0 18 18">
        <path d="M14.500 12A6 6 0 1 1 15 9.500H5.500" fill="none" stroke="#3aa0e8" strokeWidth="2.600" />
        <path d="M2 16Q-1 13 6 6 13 0 16.500 1.500 18 3 15.500 6" fill="none" stroke="#e8b830" strokeWidth="1.500" />
      </svg>
    ),
  },
  {
    name: "Windows Explorer",
    art: (
      <svg className="h-[18px] w-[18px]" viewBox="0 0 18 18">
        <path d="M2 3H7L8 5H16V13H2Z" fill="#f0cf6c" />
        <path d="M4 6H17V13H4Z" fill="#f9e7a4" />
        <path d="M2 10H16V16H13V13H5V16H2Z" fill="#6cb8e4" />
      </svg>
    ),
  },
  {
    name: "Media Player",
    art: (
      <svg className="h-[18px] w-[18px]" viewBox="0 0 18 18">
        <rect x="1.500" y="1.500" width="15" height="15" fill="#b8dcf4" stroke="#4c8cc8" />
        <circle cx="9" cy="9" r="6" fill="#f08a1c" />
        <path d="M7 5.500V12.500L12.500 9Z" fill="#fff" />
      </svg>
    ),
  },
  {
    name: "Chrome",
    art: (
      <svg className="h-4 w-4" viewBox="0 0 48 48"><ChromeShapes /></svg>
    ),
  },
  {
    name: "Opera",
    art: (
      <svg className="h-4 w-4" viewBox="0 0 48 48"><OperaShapes id="operaSmall" /></svg>
    ),
  },
];

function Taskbar() {
  return (
    <footer className="relative flex h-[27px] items-center border-t-2 border-white bg-[#d4d0c8] px-0.5 text-black">
      <button type="button" className={`flex h-[23px] w-[52px] items-center gap-px px-0.5 font-bold ${raised}`}>
        <svg className="h-4 w-4 shrink-0" viewBox="0 0 16 16" aria-hidden="true">
          <path d="M2.500 2.500Q5 0.800 7.500 2.200L6.500 7.200Q4 6 1.500 7.500Z" fill="#f06428" />
          <path d="M8.800 2.800Q11 4 15 2.500L13.500 7.800Q10.500 9 7.800 7.800Z" fill="#6cb828" />
          <path d="M1.200 8.800Q4 7.400 6.200 8.600L5 13.500Q2.500 12.500 0 13.800Z" fill="#2f80dc" />
          <path d="M7.500 9.200Q10 10.400 13.200 9.200L12 14Q9 15.200 6.300 14.200Z" fill="#f8c020" />
        </svg>
        Start
      </button>
      <div className="ml-[11px] flex gap-[5px]">
        {quickLaunch.map(({ name, art }) => (
          <button key={name} type="button" aria-label={name} className="flex h-[23px] w-[29px] items-center justify-center">
            {art}
          </button>
        ))}
      </div>
      <button type="button" aria-label="Archive" className={`ml-0.5 flex h-[23px] w-8 items-center justify-center ${raised}`}>
        <BooksIcon className="h-4 w-4" />
      </button>
      <button type="button" aria-label="Victoria" className={`ml-0.5 flex h-[23px] w-8 items-center justify-center bg-white ${sunken}`}>
        <CrossIcon className="h-4 w-4" />
      </button>
      <div className="ml-auto flex h-[23px] items-center gap-2 border border-t-[#808080] border-l-[#808080] border-r-white border-b-white pr-0.5 pl-1.5">
        <svg className="h-4 w-4" viewBox="0 0 16 16" aria-hidden="true">
          <path d="M1.500 5.500H4L8 2V14L4 10.500H1.500Z" fill="#fff" stroke="#686868" />
          <path d="M10 5.500Q11.500 8 10 10.500M12 4Q14.500 8 12 12M14 3Q17 8 14 13" fill="none" stroke="#787878" />
        </svg>
        <svg className="h-4 w-4" viewBox="0 0 16 16" aria-hidden="true">
          <rect x="4.500" y="3.500" width="11" height="9" fill="#f4f4f0" stroke="#686868" />
          <path d="M1 1V5H5V1M3 5V14H8" fill="none" stroke="#505050" strokeWidth="1.300" />
          <path d="M11 6.500 16 15.500H6Z" fill="#f8d020" stroke="#a88400" strokeWidth="0.700" />
          <path d="M10.500 9.500H11.500V12.500H10.500ZM10.500 13.500H11.500V14.500H10.500Z" />
        </svg>
        <svg className="h-4 w-4" viewBox="0 0 16 16" aria-hidden="true">
          <path d="M1.500 15V1.500H7L8.500 3.500H15.500L13 9H8.500L7 7.500H2" fill="#fff" stroke="#606060" strokeWidth="1.200" />
        </svg>
        <time className="ml-2">2:42 PM</time>
        <svg className="ml-0.5 h-4 w-4" viewBox="0 0 16 16" aria-hidden="true">
          <rect x="0.500" y="2.500" width="15" height="11" fill="#2460b8" stroke="#8caed8" />
          <path d="M1 3H15L1 10Z" fill="#4f90dc" />
          <path d="M6 14H13V15H6Z" fill="#405878" />
        </svg>
      </div>
    </footer>
  );
}

export default function App() {
  return (
    <div className="flex min-h-screen flex-col overflow-hidden bg-[#0268d4] font-['DejaVu_Sans_Condensed','DejaVu_Sans',sans-serif] text-[11px]">
      <div className="relative flex-1">
        <Wallpaper />
        <DesktopIcons />
        <ArchiveWindow />
        <DiskWindow />
        <Watermark />
        <div className="absolute right-1.5 bottom-0 text-right leading-[15px] text-white">
          <p className="font-bold">Test Mode</p>
          <p className="font-bold">Windows 7</p>
          <p>Build 7601</p>
        </div>
      </div>
      <Taskbar />
    </div>
  );
}
